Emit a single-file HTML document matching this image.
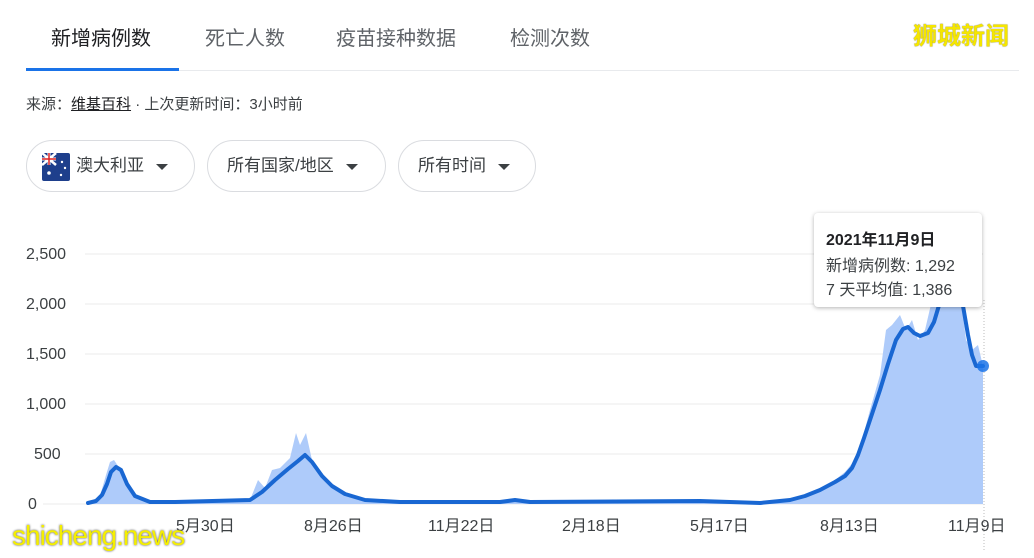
<!DOCTYPE html><html><head><meta charset="utf-8"><style>
body{margin:0;width:1034px;height:558px;background:#fff;font-family:"Liberation Sans","Noto Sans CJK SC",sans-serif;position:relative;overflow:hidden;color:#202124}
.a{position:absolute;white-space:nowrap}
.tab{font-size:20px;top:22px;color:#5f6368}
.chip{position:absolute;top:140px;height:52px;border:1px solid #dadce0;border-radius:26px;box-sizing:border-box;font-size:17px;color:#3c4043;line-height:50px;padding-left:19px}
.tri{display:inline-block;width:0;height:0;border-left:6px solid transparent;border-right:6px solid transparent;border-top:6px solid #3c4043;vertical-align:middle;margin-left:12px}
.yl{font-size:16px;color:#3c4043;left:26px}
.xl{font-size:16px;color:#3c4043;top:512px}
</style></head><body>
<div class="a tab" style="left:51px;color:#202124">新增病例数</div>
<div class="a tab" style="left:205px">死亡人数</div>
<div class="a tab" style="left:336px">疫苗接种数据</div>
<div class="a tab" style="left:510px">检测次数</div>
<div class="a" style="left:26px;top:70px;width:993px;height:1px;background:#e8eaed"></div>
<div class="a" style="left:26px;top:68px;width:153px;height:3px;background:#1a73e8"></div>
<div class="a" style="left:913px;top:16px;font-size:24px;color:#f5e600;font-weight:bold;text-shadow:0 0 1px #555">狮城新闻</div>
<div class="a" style="left:26px;top:93px;font-size:15px;color:#3c4043">来源：<span style="text-decoration:underline;color:#202124">维基百科</span> · 上次更新时间：3小时前</div>
<div class="chip" style="left:26px;width:169px"><svg width="28" height="28" viewBox="0 0 28 28" style="vertical-align:middle;margin-right:6px;margin-left:-4px"><rect width="28" height="28" rx="2" fill="#1e3f8c"/><path d="M0 0L14 12M14 0L0 12" stroke="#fff" stroke-width="2.5"/><path d="M7 0V12M0 6H14" stroke="#fff" stroke-width="3"/><path d="M7 0V12M0 6H14" stroke="#d22" stroke-width="1.5"/><circle cx="7" cy="20" r="1.8" fill="#fff"/><circle cx="20" cy="9" r="1.2" fill="#fff"/><circle cx="23" cy="15" r="1.2" fill="#fff"/><circle cx="19" cy="22" r="1.2" fill="#fff"/></svg>澳大利亚<span class="tri"></span></div>
<div class="chip" style="left:207px;width:179px">所有国家/地区<span class="tri"></span></div>
<div class="chip" style="left:398px;width:138px">所有时间<span class="tri"></span></div>
<svg class="a" style="left:0;top:0" width="1034" height="558">
<g stroke="#ebebeb" stroke-width="1"><line x1="85" y1="254" x2="983" y2="254"/><line x1="85" y1="304" x2="983" y2="304"/><line x1="85" y1="354" x2="983" y2="354"/><line x1="85" y1="404" x2="983" y2="404"/><line x1="85" y1="454" x2="983" y2="454"/><line x1="43" y1="504" x2="983" y2="504"/></g>
<line x1="984" y1="300" x2="984" y2="550" stroke="#bbb" stroke-dasharray="1,2"/>
<polygon fill="#aecbfa" points="88,504 88,503 100,496 106,475 110,462 114,460 118,466 124,480 135,496 150,502 250,500 258,480 265,488 272,470 280,468 290,458 296,433 300,445 306,433 312,460 330,483 345,494 365,500 400,502 500,502 515,500 530,502 700,501 760,503 790,500 805,496 820,488 835,480 845,472 855,460 862,440 870,410 880,375 886,330 892,325 900,315 906,330 912,320 918,340 925,330 932,300 940,280 950,280 960,290 966,340 972,350 978,345 983,366 983,504"/>
<polyline fill="none" stroke="#1967d2" stroke-width="4" stroke-linejoin="round" stroke-linecap="round" points="88,503 96,501 102,495 107,484 111,472 116,467 121,470 127,484 135,496 150,502 175,502 250,500 262,492 275,480 288,469 298,461 305,455 312,462 322,476 332,486 345,494 365,500 400,502 500,502 515,500 530,502 700,501 760,503 790,500 805,496 820,490 835,482 845,476 852,468 858,455 864,438 870,420 880,390 888,364 896,340 903,329 908,327 914,333 920,336 928,333 934,322 940,302 947,288 955,282 962,300 968,335 972,355 976,366 983,366"/>
<circle cx="983" cy="366" r="6" fill="#1a73e8" opacity=".85"/>
</svg>
<div class="a yl" style="top:246px">2,500</div>
<div class="a yl" style="top:296px">2,000</div>
<div class="a yl" style="top:346px">1,500</div>
<div class="a yl" style="top:396px">1,000</div>
<div class="a yl" style="top:446px;left:34px">500</div>
<div class="a yl" style="top:496px;left:28px">0</div>
<div class="a xl" style="left:176px">5月30日</div>
<div class="a xl" style="left:304px">8月26日</div>
<div class="a xl" style="left:428px">11月22日</div>
<div class="a xl" style="left:562px">2月18日</div>
<div class="a xl" style="left:690px">5月17日</div>
<div class="a xl" style="left:820px">8月13日</div>
<div class="a xl" style="left:948px">11月9日</div>
<div class="a" style="left:814px;top:213px;width:168px;height:94px;background:#fff;border-radius:4px;box-shadow:0 1px 4px rgba(0,0,0,.3)"></div>
<div class="a" style="left:826px;top:226px;font-size:16px;font-weight:bold">2021年11月9日</div>
<div class="a" style="left:826px;top:252px;font-size:16px;color:#3c4043">新增病例数: 1,292</div>
<div class="a" style="left:826px;top:276px;font-size:16px;color:#3c4043">7 天平均值: 1,386</div>
<div class="a" style="left:12px;top:520px;font-size:28px;color:#f5ef00;text-shadow:0 0 2px #444;letter-spacing:-1px">shicheng.news</div>
</body></html>
